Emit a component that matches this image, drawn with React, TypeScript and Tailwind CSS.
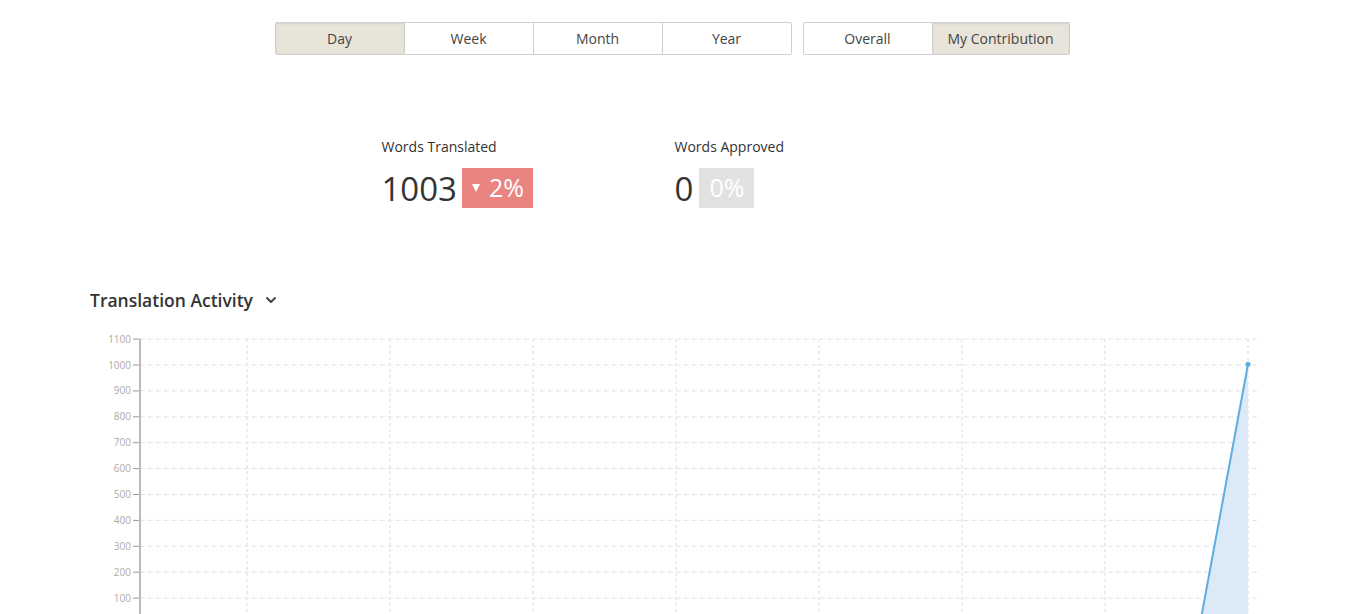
import { ChevronDown } from 'lucide-react';

const periods = ['Day', 'Week', 'Month', 'Year'];
const ticks = [1100, 1000, 900, 800, 700, 600, 500, 400, 300, 200, 100];
const vLines = [157, 300, 443, 586, 729, 872, 1015, 1158];

function yOf(v: number) {
  return 294 - v * 0.259;
}

/* =========================
   CHART
========================= */
function Chart() {
  const px = 1158;
  const py = yOf(1003);
  return (
    <svg width="1180" height="284" className="block">
      {ticks.map((t) => (
        <g key={t}>
          <line x1="50" x2="1168" y1={yOf(t)} y2={yOf(t)} stroke="#e3e3e3" strokeDasharray="5 3" />
          <line x1="43" x2="50" y1={yOf(t)} y2={yOf(t)} stroke="#999" />
          <text x="41" y={yOf(t) + 3.5} textAnchor="end" fontSize="10" fill="#b0aaa6" fontFamily="Open Sans, sans-serif">
            {t}
          </text>
        </g>
      ))}
      {vLines.map((x) => (
        <line key={x} x1={x} x2={x} y1="9" y2="300" stroke="#ececec" strokeWidth="2" strokeDasharray="3 3" />
      ))}
      <path d={`M1110 ${yOf(0)} L${px} ${py} L${px} ${yOf(0)} Z`} fill="#dbeaf6" />
      <line x1="1110" y1={yOf(0)} x2={px} y2={py} stroke="#5dade2" strokeWidth="2" />
      <circle cx={px} cy={py} r="2.5" fill="#5dade2" />
      <line x1="50" x2="50" y1="9" y2="300" stroke="#bbb" strokeWidth="2" />
    </svg>
  );
}

/* =========================
   APP
========================= */
export default function App() {
  return (
    <div className="h-[614px] bg-white text-[#333] font-['Open_Sans',sans-serif] overflow-hidden">
      {/* FILTERS */}
      <div className="flex justify-center pt-[22px] pr-[5px] gap-[11px]">
        <div className="flex">
          {periods.map((p, i) => (
            <button
              key={p}
              className={`h-[33px] text-[14px] text-[#444] border-y border-r border-[#cfcfcf] ${
                i === 0 ? 'w-[130px] border-l bg-[#e8e4d9] rounded-l-[2px] shadow-[inset_0_1px_2px_rgba(0,0,0,0.08)]' : 'w-[129px] bg-white'
              } ${i === periods.length - 1 ? 'rounded-r-[2px]' : ''}`}
            >
              {p}
            </button>
          ))}
        </div>
        <div className="flex">
          <button className="h-[33px] w-[130px] text-[14px] text-[#444] border border-[#cfcfcf] bg-white rounded-l-[2px]">
            Overall
          </button>
          <button className="h-[33px] w-[137px] text-[14px] text-[#444] border-y border-r border-[#cfcfcf] bg-[#e8e4d9] rounded-r-[2px] shadow-[inset_0_1px_2px_rgba(0,0,0,0.08)]">
            My Contribution
          </button>
        </div>
      </div>

      {/* STATS */}
      <div className="flex justify-center mt-[82px]">
        <div className="w-[293px]">
          <p className="text-[14px] leading-[20px]">Words Translated</p>
          <div className="flex items-center mt-[11px] h-[40px]">
            <span className="text-[33px] leading-none mr-[5px]">1003</span>
            <span className="h-[40px] pl-[10px] pr-[9px] flex items-center bg-[#ea8480] text-white text-[25px]">
              <span className="w-0 h-0 border-x-[4px] border-x-transparent border-t-[8px] border-t-white mr-[9px]" />
              2%
            </span>
          </div>
        </div>
        <div className="w-[293px]">
          <p className="text-[14px] leading-[20px]">Words Approved</p>
          <div className="flex items-center mt-[11px] h-[40px]">
            <span className="text-[33px] leading-none mr-[6px]">0</span>
            <span className="h-[40px] px-[10px] flex items-center bg-[#e2e2e0] text-white text-[25px]">0%</span>
          </div>
        </div>
      </div>

      {/* ACTIVITY */}
      <div className="pl-[90px] mt-[80px]">
        <div className="flex items-center gap-[10px] h-[24px]">
          <h2 className="text-[17.5px] font-semibold text-[#333]">Translation Activity</h2>
          <ChevronDown size={16} strokeWidth={3} className="text-[#444]" />
        </div>
        <div className="mt-[18px]">
          <Chart />
        </div>
      </div>
    </div>
  );
}
